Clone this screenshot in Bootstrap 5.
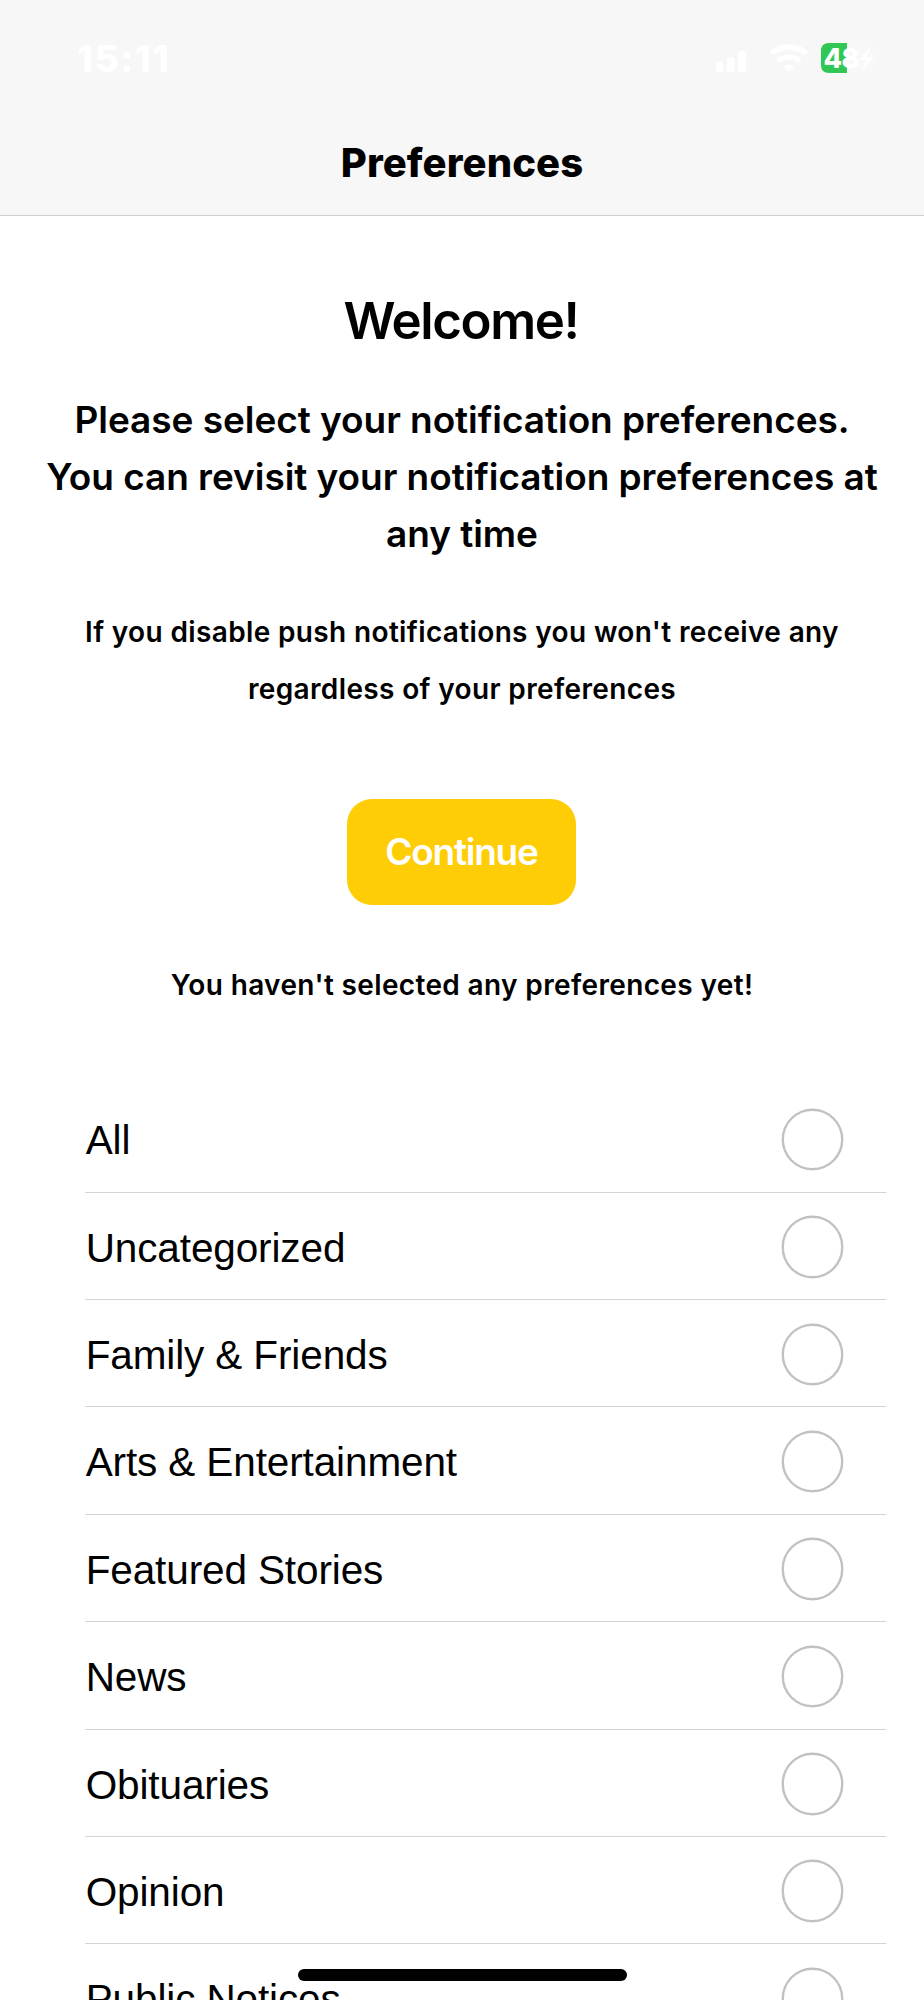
<!DOCTYPE html>
<html lang="en">
<head>
<meta charset="utf-8">
<meta name="viewport" content="width=device-width, initial-scale=1">
<title>Preferences</title>
<link href="https://cdn.jsdelivr.net/npm/bootstrap@5.3.0/dist/css/bootstrap.min.css" rel="stylesheet">
<style>
  body { font-family: Inter, sans-serif; color: #000; background: #fff; }
  .screen { height: 2000px; }
  .topbar { height: 216px; padding-top: 37px; background: #f7f7f7; border-bottom: 1px solid #cfcfcf; }
  .status { height: 44px; padding: 0 43px 0 77px; margin-bottom: 56.5px; }
  .clock { font-size: 36.5px; line-height: 44px; font-weight: 800; letter-spacing: 1.7px; color: #fff; }
  .topbar h1 { font-size: 40px; line-height: 50px; font-weight: 800; letter-spacing: .1px; }
  .intro { padding-top: 74.5px; font-weight: 600; }
  .intro h2 { font-size: 51px; line-height: 60px; font-weight: 600; letter-spacing: -1.4px; margin-bottom: 40.5px; padding-right: 2px; }
  .pitch { font-size: 37px; line-height: 57px; letter-spacing: -.05px; margin-bottom: 41.5px; }
  .note { font-size: 28px; line-height: 57px; letter-spacing: .36px; }
  .btn-go { width: 229px; height: 106px; margin: 81px 1px 52px 0; border-radius: 25px; background: #ffcd05; color: #fff; font-size: 37px; line-height: 44px; font-weight: 600; letter-spacing: -1.25px; }
  .btn-go:hover { background: #f2c200; color: #fff; }
  .choices { margin: 71.8px 38px 0 85px; font: 40.5px "Liberation Sans", sans-serif; letter-spacing: -.12px; }
  .choice { height: 107.4px; padding: 2px 43px 0 .7px; border-bottom: 1px solid #d4d4d4; }
  .choice span { line-height: 50px; padding-top: 1.5px; }
  .ring.form-check-input { width: 61.5px; height: 61.5px; margin: 0; border: 2px solid #c2c2c2; box-shadow: 0 0 0 .4px #c2c2c2; background: #fff; }
  .homebar { left: 298px; top: 1969px; width: 329px; height: 12px; background: #000; }
</style>
</head>
<body>
<div class="screen position-relative overflow-hidden">
  <header class="topbar">
    <div class="status d-flex justify-content-between align-items-start">
      <span class="clock">15:11</span>
      <svg width="168" height="44" viewBox="0 0 168 44" fill="#fff" aria-hidden="true">
        <rect x="3" y="25" width="7.500" height="10" rx="2"/>
        <rect x="14" y="20.500" width="7.500" height="14.500" rx="2"/>
        <rect x="25" y="14" width="8" height="21" rx="2"/>
        <rect x="36" y="8" width="7.500" height="27" rx="2" opacity=".1"/>
        <path d="M58.500 16.500a27 27 0 0 1 35 0" fill="none" stroke="#fff" stroke-width="5.500"/>
        <path d="M65 24a17 17 0 0 1 22 0" fill="none" stroke="#fff" stroke-width="5"/>
        <path d="M70.500 29.500a8.500 8.500 0 0 1 11 0L76 35z"/>
        <rect x="108" y="6" width="54" height="30" rx="8" opacity=".2"/>
        <path d="M164 16.500q5 4.500 0 9z" opacity=".2"/>
        <path d="M134 6h-18q-8 0-8 8v14q0 8 8 8h18z" fill="#30c754"/>
        <text x="110.500" y="31" font-family="Inter, sans-serif" font-weight="800" font-size="27" letter-spacing="-.5">48</text>
        <path d="M157 10l-11 13h6.500l-3 10 11-13H154z"/>
      </svg>
    </div>
    <h1 class="text-center m-0">Preferences</h1>
  </header>

  <main>
    <section class="intro text-center">
      <h2>Welcome!</h2>
      <p class="pitch">Please select your notification preferences.<br>You can revisit your notification preferences at<br>any time</p>
      <p class="note m-0">If you disable push notifications you won't receive any<br>regardless of your preferences</p>
      <button type="button" class="btn btn-go border-0 p-0">Continue</button>
      <p class="note m-0">You haven't selected any preferences yet!</p>
    </section>

    <div class="choices">
      <label class="choice d-flex justify-content-between align-items-center"><span>All</span><input class="form-check-input ring rounded-circle" type="checkbox"></label>
      <label class="choice d-flex justify-content-between align-items-center"><span>Uncategorized</span><input class="form-check-input ring rounded-circle" type="checkbox"></label>
      <label class="choice d-flex justify-content-between align-items-center"><span>Family &amp; Friends</span><input class="form-check-input ring rounded-circle" type="checkbox"></label>
      <label class="choice d-flex justify-content-between align-items-center"><span>Arts &amp; Entertainment</span><input class="form-check-input ring rounded-circle" type="checkbox"></label>
      <label class="choice d-flex justify-content-between align-items-center"><span>Featured Stories</span><input class="form-check-input ring rounded-circle" type="checkbox"></label>
      <label class="choice d-flex justify-content-between align-items-center"><span>News</span><input class="form-check-input ring rounded-circle" type="checkbox"></label>
      <label class="choice d-flex justify-content-between align-items-center"><span>Obituaries</span><input class="form-check-input ring rounded-circle" type="checkbox"></label>
      <label class="choice d-flex justify-content-between align-items-center"><span>Opinion</span><input class="form-check-input ring rounded-circle" type="checkbox"></label>
      <label class="choice d-flex justify-content-between align-items-center"><span>Public Notices</span><input class="form-check-input ring rounded-circle" type="checkbox"></label>
    </div>
  </main>
  <div class="homebar position-absolute rounded-pill"></div>
</div>
<script src="https://cdn.jsdelivr.net/npm/bootstrap@5.3.0/dist/js/bootstrap.bundle.min.js"></script>
</body>
</html>
